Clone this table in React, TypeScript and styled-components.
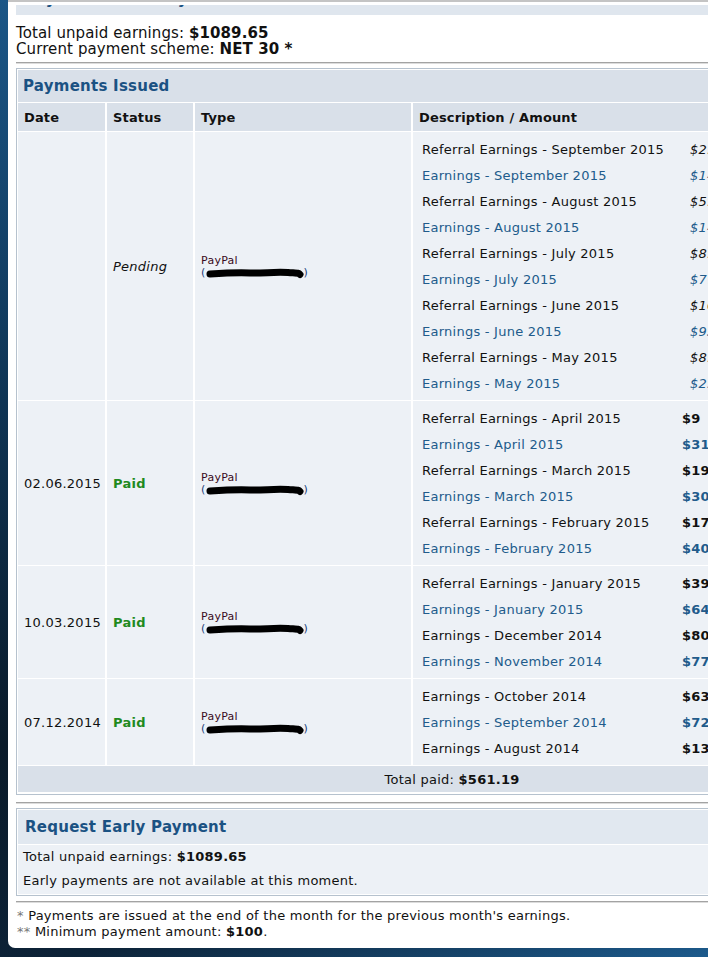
import React from 'react';
import styled, { createGlobalStyle } from 'styled-components';

type Line = { label: string; amount: string; referral: boolean };
type Payment = { date: string; status: 'Pending' | 'Paid'; lines: Line[] };

const PAYMENTS: Payment[] = [
	{
		date: '',
		status: 'Pending',
		lines: [
			{ label: 'Referral Earnings - September 2015', amount: '$2.81', referral: true },
			{ label: 'Earnings - September 2015', amount: '$146.52', referral: false },
			{ label: 'Referral Earnings - August 2015', amount: '$5.37', referral: true },
			{ label: 'Earnings - August 2015', amount: '$142.10', referral: false },
			{ label: 'Referral Earnings - July 2015', amount: '$8.64', referral: true },
			{ label: 'Earnings - July 2015', amount: '$77.35', referral: false },
			{ label: 'Referral Earnings - June 2015', amount: '$10.22', referral: true },
			{ label: 'Earnings - June 2015', amount: '$93.48', referral: false },
			{ label: 'Referral Earnings - May 2015', amount: '$8.91', referral: true },
			{ label: 'Earnings - May 2015', amount: '$254.17', referral: false },
		],
	},
	{
		date: '02.06.2015',
		status: 'Paid',
		lines: [
			{ label: 'Referral Earnings - April 2015', amount: '$9', referral: true },
			{ label: 'Earnings - April 2015', amount: '$31.46', referral: false },
			{ label: 'Referral Earnings - March 2015', amount: '$19.08', referral: true },
			{ label: 'Earnings - March 2015', amount: '$30.72', referral: false },
			{ label: 'Referral Earnings - February 2015', amount: '$17.55', referral: true },
			{ label: 'Earnings - February 2015', amount: '$40.13', referral: false },
		],
	},
	{
		date: '10.03.2015',
		status: 'Paid',
		lines: [
			{ label: 'Referral Earnings - January 2015', amount: '$39.61', referral: true },
			{ label: 'Earnings - January 2015', amount: '$64.28', referral: false },
			{ label: 'Earnings - December 2014', amount: '$80.94', referral: true },
			{ label: 'Earnings - November 2014', amount: '$77.40', referral: false },
		],
	},
	{
		date: '07.12.2014',
		status: 'Paid',
		lines: [
			{ label: 'Earnings - October 2014', amount: '$63.17', referral: true },
			{ label: 'Earnings - September 2014', amount: '$72.65', referral: false },
			{ label: 'Earnings - August 2014', amount: '$13.07', referral: true },
		],
	},
];

const GlobalStyle = createGlobalStyle`
	html, body {
		margin: 0;
		height: 957px;
		overflow: hidden;
	}

	body {
		background: linear-gradient(165deg, #1b5687 0%, #0f3454 35%, #0a1a29 65%, #0c2237 85%, #1c5a8c 100%);
		font-family: 'DejaVu Sans', Verdana, sans-serif;
		letter-spacing: 0.25px;
		color: #111;
	}
`;

const Panel = styled.div`
	margin-left: 8px;
	width: 960px;
	height: 948px;
	background: #fff;
	border-bottom-left-radius: 7px;
	border-top: 2px solid #c4c4c4;
	box-sizing: border-box;
	padding: 3px 0 0 8px;
	overflow: hidden;
`;

const PrevHeader = styled.div`
	height: 10px;
	width: 874px;
	background: #dfe6ee;
	overflow: hidden;
`;

const PrevTitle = styled.div`
	font-size: 15px;
	font-weight: bold;
	color: #1b5283;
	padding-left: 9px;
	line-height: 16px;
	margin-top: -14px;
`;

const Summary = styled.div`
	font-size: 15px;
	line-height: 16px;
	letter-spacing: 0.1px;
	padding-top: 10px;
`;

const Rule = styled.hr<{ $top: number; $bottom: number }>`
	width: 890px;
	margin: ${(p) => p.$top}px 0 ${(p) => p.$bottom}px;
	border: none;
	border-top: 1px solid #a3a3a3;
	border-bottom: 1px solid #dcdcdc;
	height: 0;
`;

const Box = styled.div`
	width: 870px;
	border: 1px solid #b6c2ce;
	padding: 1px;
	background: #fff;
`;

const BoxTitle = styled.div<{ $pad: number; $height: number; $bg: string }>`
	height: ${(p) => p.$height}px;
	display: flex;
	align-items: center;
	padding-left: ${(p) => p.$pad}px;
	background: ${(p) => p.$bg};
	font-size: 15px;
	font-weight: bold;
	color: #1b5283;
`;

const Table = styled.table`
	width: 872px;
	margin: 0 -2px;
	border-collapse: separate;
	border-spacing: 2px 1px;
	table-layout: fixed;
	font-size: 13px;
`;

const Th = styled.th`
	background: #d9e0e9;
	text-align: left;
	font-weight: bold;
	letter-spacing: 0.15px;
	height: 28px;
	padding: 0 6px;
	color: #111;
`;

const Td = styled.td`
	background: #edf1f6;
	padding: 0 6px;
	vertical-align: middle;
	color: #111;
`;

const DescTd = styled(Td)`
	padding: 4px 9px;
`;

const Status = styled.span<{ $paid: boolean }>`
	color: ${(p) => (p.$paid ? '#1f8a1f' : '#111')};
	font-weight: ${(p) => (p.$paid ? 'bold' : 'normal')};
	font-style: ${(p) => (p.$paid ? 'normal' : 'italic')};
`;

const Method = styled.div`
	font-size: 11px;
	line-height: 13px;
	color: #3a0b22;
`;

const Masked = styled.div`
	display: flex;
	align-items: center;
	height: 12px;
	color: #1b3f7a;
`;

const Lines = styled.div<{ $labelWidth: number }>`
	display: grid;
	grid-template-columns: ${(p) => p.$labelWidth}px auto;
	grid-auto-rows: 26px;
	align-items: center;
	white-space: nowrap;
`;

const LineText = styled.span<{ $referral: boolean }>`
	color: ${(p) => (p.$referral ? '#111' : '#215b8b')};
`;

const Amount = styled(LineText)<{ $pending: boolean }>`
	font-style: ${(p) => (p.$pending ? 'italic' : 'normal')};
	font-weight: ${(p) => (p.$pending ? 'normal' : 'bold')};
`;

const TotalTd = styled.td`
	background: #d9e0e9;
	height: 24px;
	text-align: center;
	font-size: 13px;
`;

const EarlyBody = styled.div`
	margin-top: 1px;
	background: #edf1f6;
	padding: 0 5px 1px;
	font-size: 13px;
	line-height: 24px;
`;

const Footer = styled.div`
	font-size: 13px;
	line-height: 16px;
	padding-left: 1px;
`;

const Star = styled.span`
	color: #777;
`;

const Redacted = () => (
	<svg width="98" height="12" viewBox="0 0 98 12">
		<path
			d="M4 7 C 20 6, 30 5.5, 44 6 S 68 4.5, 82 5.5 S 92 6, 94 7.5"
			stroke="#000"
			strokeWidth="7"
			strokeLinecap="round"
			fill="none"
		/>
	</svg>
);

const App = () => {
	return (
		<>
			<GlobalStyle />
			<Panel>
				<PrevHeader>
					<PrevTitle>Payment Summary</PrevTitle>
				</PrevHeader>
				<Summary>
					Total unpaid earnings: <b>$1089.65</b>
					<br />
					Current payment scheme: <b>NET 30 *</b>
				</Summary>
				<Rule $top={5} $bottom={4} />
				<Box>
					<BoxTitle $pad={5} $height={32} $bg="#d9e0e9">
						Payments Issued
					</BoxTitle>
					<Table>
						<colgroup>
							<col style={{ width: 87 }} />
							<col style={{ width: 86 }} />
							<col style={{ width: 216 }} />
							<col />
						</colgroup>
						<thead>
							<tr>
								<Th>Date</Th>
								<Th>Status</Th>
								<Th>Type</Th>
								<Th>Description / Amount</Th>
							</tr>
						</thead>
						<tbody>
							{PAYMENTS.map((payment, index) => {
								const pending = payment.status === 'Pending';
								return (
									<tr key={`payment-${index}`}>
										<Td>{payment.date}</Td>
										<Td>
											<Status $paid={!pending}>{payment.status}</Status>
										</Td>
										<Td>
											<Method>
												PayPal
												<Masked>
													(<Redacted />)
												</Masked>
											</Method>
										</Td>
										<DescTd>
											<Lines $labelWidth={pending ? 268 : 260}>
												{payment.lines.map((line, lineIndex) => (
													<React.Fragment key={`line-${lineIndex}`}>
														<LineText $referral={line.referral}>{line.label}</LineText>
														<Amount $referral={line.referral} $pending={pending}>
															{line.amount}
														</Amount>
													</React.Fragment>
												))}
											</Lines>
										</DescTd>
									</tr>
								);
							})}
							<tr>
								<TotalTd colSpan={4}>
									Total paid: <b>$561.19</b>
								</TotalTd>
							</tr>
						</tbody>
					</Table>
				</Box>
				<Rule $top={7} $bottom={4} />
				<Box>
					<BoxTitle $pad={7} $height={34} $bg="#e1e8f0">
						Request Early Payment
					</BoxTitle>
					<EarlyBody>
						Total unpaid earnings: <b>$1089.65</b>
						<br />
						Early payments are not available at this moment.
					</EarlyBody>
				</Box>
				<Rule $top={5} $bottom={5} />
				<Footer>
					<Star>*</Star> Payments are issued at the end of the month for the previous month's earnings.
					<br />
					<Star>**</Star> Minimum payment amount: <b>$100</b>.
				</Footer>
			</Panel>
		</>
	);
};

export default App;
